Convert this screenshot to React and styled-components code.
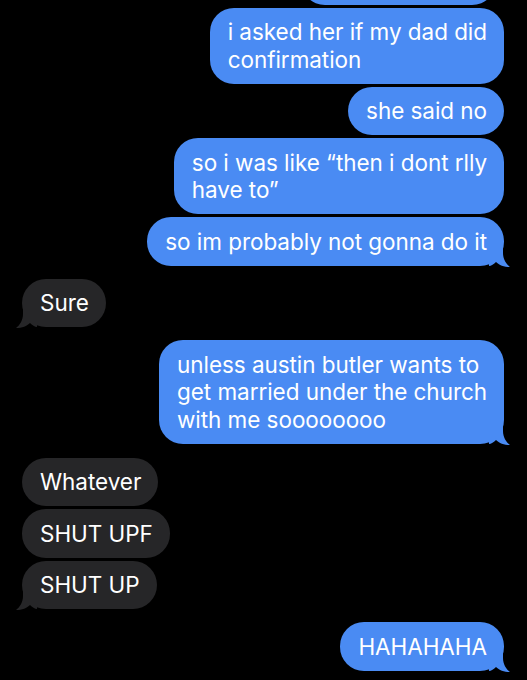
import React from "react";
import styled, { createGlobalStyle } from "styled-components";

const Global = createGlobalStyle`
  html, body {
    margin: 0;
    padding: 0;
    background: #000;
  }
  body {
    font-family: Inter, "Liberation Sans", sans-serif;
    -webkit-font-smoothing: antialiased;
  }
`;

const Screen = styled.div`
  width: 527px;
  height: 680px;
  overflow: hidden;
  background: #000;
  display: flex;
  flex-direction: column;
  padding: 0 23px 0 22px;
  box-sizing: border-box;
`;

const Group = styled.div`
  flex-shrink: 0;
  display: flex;
  flex-direction: column;
  align-items: ${(p) => (p.$mine ? "flex-end" : "flex-start")};
  gap: 3px;
  margin-top: ${(p) => p.$top ?? 13}px;
`;

const Bubble = styled.div`
  flex-shrink: 0;
  position: relative;
  background: ${(p) => (p.$mine ? "#4a8bf3" : "#262628")};
  color: #fff;
  font-size: 22.5px;
  line-height: 27.5px;
  padding: 10.5px 17px 10.5px 18px;
  border-radius: 24px;
  white-space: nowrap;
  letter-spacing: -0.05px;
`;

const Cut = styled(Bubble)`
  width: 160px;
  height: 27.5px;
  margin-top: -44px;
  margin-right: 8px;
`;

const TailSvg = styled.svg`
  position: absolute;
  bottom: -1px;
  ${(p) => (p.$mine ? "right: -7px;" : "left: -7px; transform: scaleX(-1);")}
  width: 22px;
  height: 22px;
`;

function Tail({ mine }) {
  return (
    <TailSvg $mine={mine} viewBox="0 0 22 22">
      <path
        d="M0 0 H14 V8 C14 14 17 19 21 22 C15 22 10 20 7 17 C5 19 2 21 0 21 Z"
        fill={mine ? "#4a8bf3" : "#262628"}
      />
    </TailSvg>
  );
}

function Msg({ mine, tail, lines }) {
  return (
    <Bubble $mine={mine}>
      {tail && <Tail mine={mine} />}
      <span style={{ position: "relative" }}>
        {lines.map((l, i) => (
          <React.Fragment key={i}>
            {i > 0 && <br />}
            {l}
          </React.Fragment>
        ))}
      </span>
    </Bubble>
  );
}

export default function App() {
  return (
    <>
      <Global />
      <Screen>
        <Group $mine $top={0}>
          <Cut $mine />
          <Msg mine lines={["i asked her if my dad did", "confirmation"]} />
          <Msg mine lines={["she said no"]} />
          <Msg mine lines={["so i was like \u201cthen i dont rlly", "have to\u201d"]} />
          <Msg mine tail lines={["so im probably not gonna do it"]} />
        </Group>
        <Group>
          <Msg tail lines={["Sure"]} />
        </Group>
        <Group $mine $top={13}>
          <Msg
            mine
            tail
            lines={[
              "unless austin butler wants to",
              "get married under the church",
              "with me soooooooo",
            ]}
          />
        </Group>
        <Group $top={14}>
          <Msg lines={["Whatever"]} />
          <Msg lines={["SHUT UPF"]} />
          <Msg tail lines={["SHUT UP"]} />
        </Group>
        <Group $mine $top={13}>
          <Msg mine tail lines={["HAHAHAHA"]} />
        </Group>
      </Screen>
    </>
  );
}
